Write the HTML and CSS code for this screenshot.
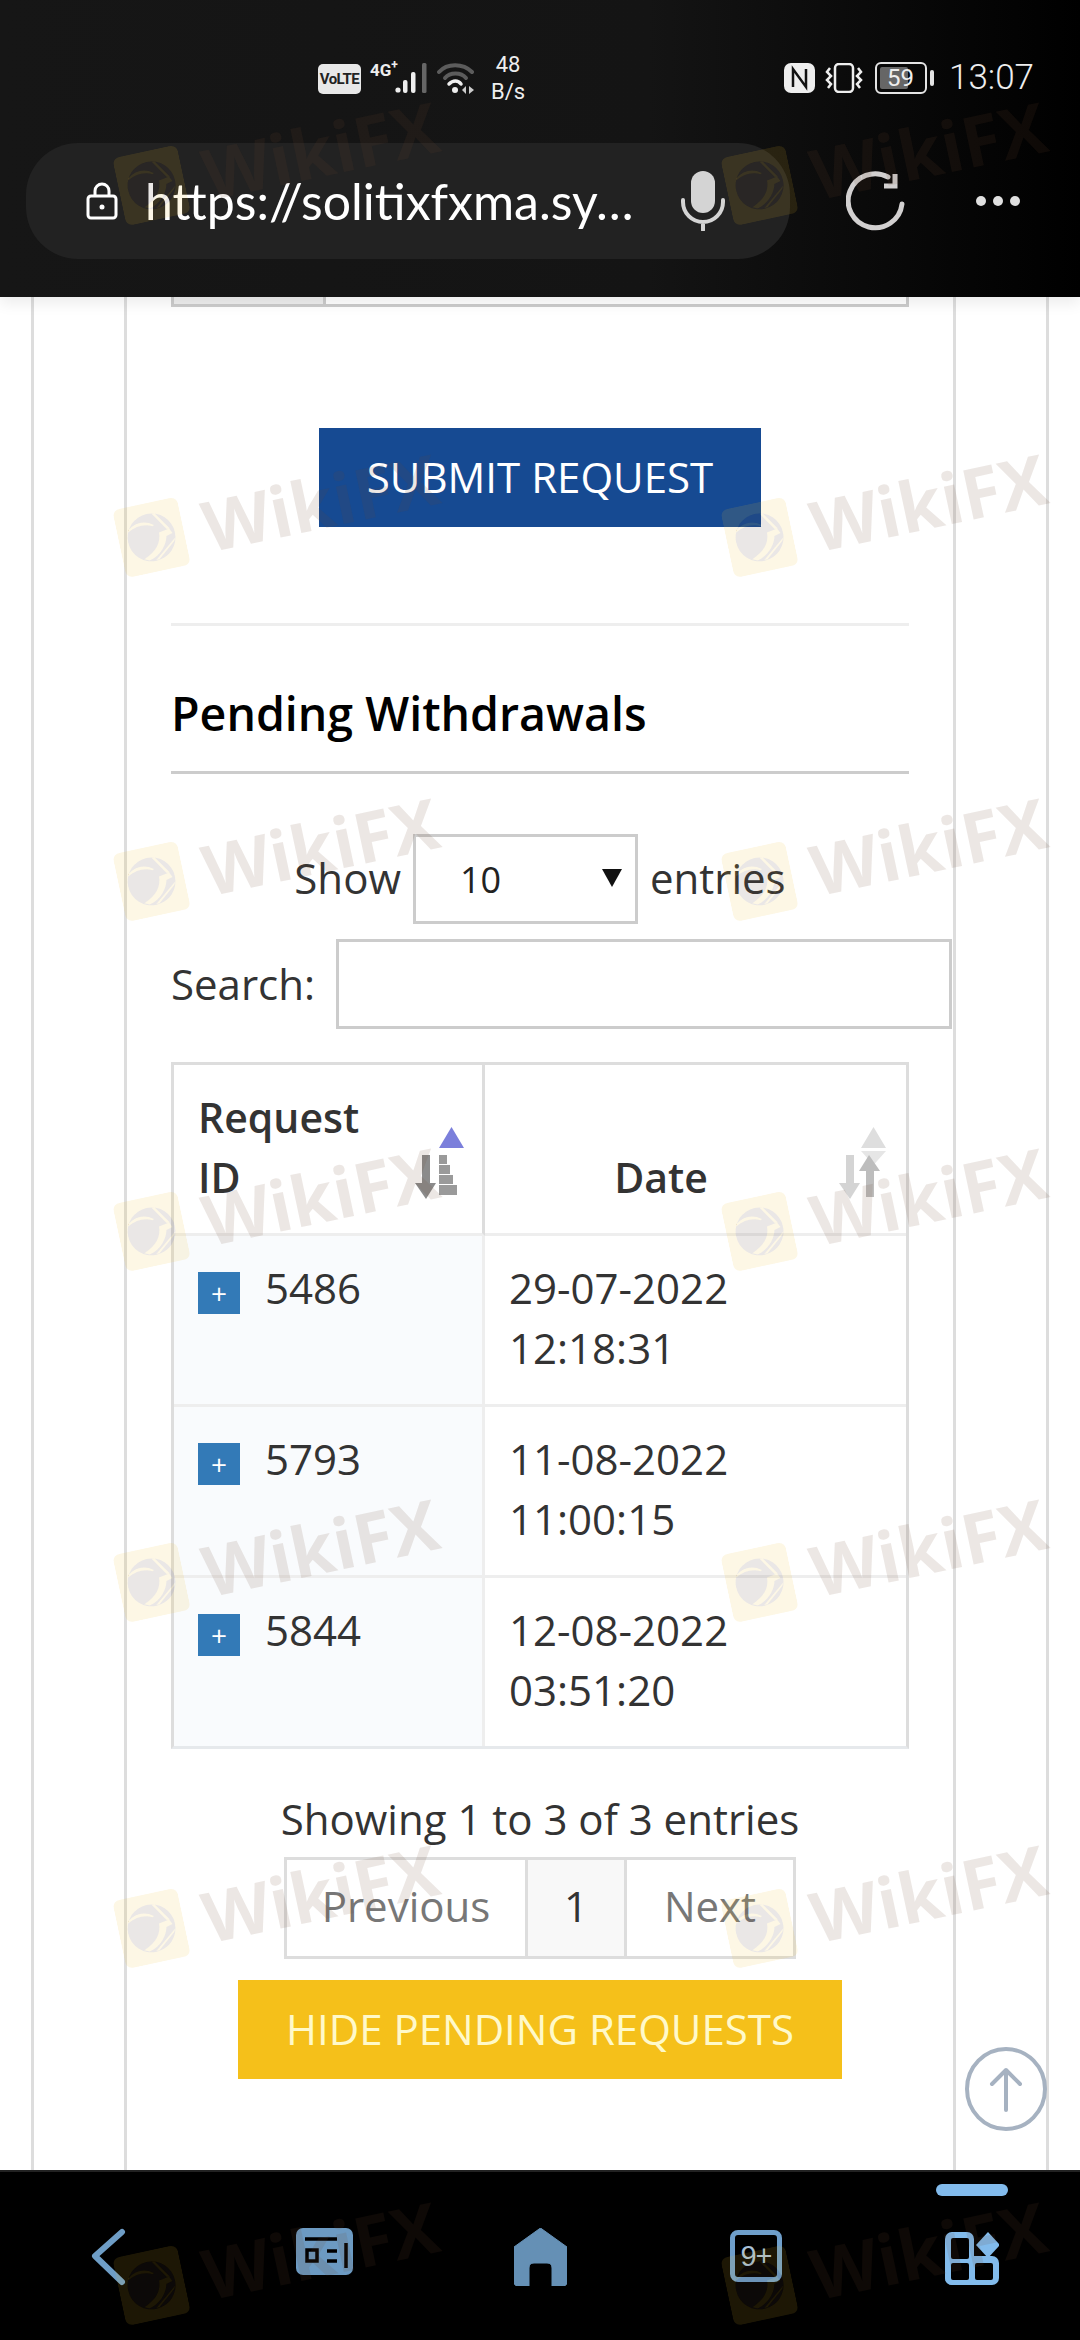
FILE: index.html
```html
<!DOCTYPE html>
<html lang="en">
<head>
  <meta charset="UTF-8" />
  <meta name="viewport" content="width=device-width, initial-scale=1.0" />
  <title>Pending Withdrawals</title>
  <link rel="stylesheet" href="styles.css">
</head>
<body>
  <svg class="defs" width="0" height="0">
    <symbol id="wm-logo" viewBox="0 0 80 84">
      <path fill="#f0be28" fill-opacity="0.12" fill-rule="evenodd" d="M10 0H70Q80 0 80 10V74Q80 84 70 84H10Q0 84 0 74V10Q0 0 10 0ZM40 13A29 29 0 1 0 40 71A29 29 0 1 0 40 13Z"/>
      <path fill="#f0be28" fill-opacity="0.12" d="M63 36L50 38C50 50 42 60 26 66L32 69C46 66 56 54 58 44L66 42ZM46 14L50 15L64 36L60 36ZM14 28C24 20 36 20 46 28L44 29C34 24 24 25 14 30ZM68 48L66 52L44 70L40 70Z"/>
      <path fill="#5a463c" fill-opacity="0.13" fill-rule="evenodd" d="M40 13A29 29 0 1 0 40 71A29 29 0 1 0 40 13ZM63 36L50 38C50 50 42 60 26 66L32 69C46 66 56 54 58 44L66 42ZM46 14L50 15L64 36L60 36ZM14 28C24 20 36 20 46 28L44 29C34 24 24 25 14 30ZM68 48L66 52L44 70L40 70Z"/>
    </symbol>
  </svg>

  <header class="topbar">
    <div class="statusbar">
      <div class="status-left">
        <span class="volte">VoLTE</span>
        <span class="net">4G<sup>+</sup></span>
        <svg class="signal" width="32" height="30" viewBox="0 0 32 30">
          <circle cx="3" cy="27" r="2.6" fill="#eee"/>
          <rect x="8" y="17" width="4.5" height="13" rx="2" fill="#eee"/>
          <rect x="16" y="9" width="4.5" height="21" rx="2" fill="#eee"/>
          <rect x="27" y="0" width="4.5" height="30" rx="1.5" fill="#666"/>
        </svg>
        <svg class="wifi" width="38" height="32" viewBox="0 0 38 32">
          <path d="M2 10C10 1 26 1 35 10" fill="none" stroke="#5c5c5c" stroke-width="4" stroke-linecap="round"/>
          <path d="M8 16C13 10 24 10 29 16" fill="none" stroke="#5c5c5c" stroke-width="4" stroke-linecap="round"/>
          <path d="M12 22C16 18 21 18 24 22" fill="none" stroke="#eee" stroke-width="3.5" stroke-linecap="round"/>
          <circle cx="18" cy="28" r="3" fill="#eee"/>
          <path d="M29 24V32L25 28ZM32 24V32L37 28Z" fill="#ccc"/>
        </svg>
        <span class="speed">48<br>B/s</span>
      </div>
      <div class="status-right">
        <svg class="nfc" width="31" height="30" viewBox="0 0 31 30">
          <rect x="0" y="0" width="31" height="30" rx="7" fill="#eee"/>
          <path d="M9 24V6L22 24V6" fill="none" stroke="#111" stroke-width="2.5"/>
        </svg>
        <svg class="vibrate" width="38" height="30" viewBox="0 0 38 30">
          <rect x="10" y="1" width="18" height="28" rx="4" fill="none" stroke="#eee" stroke-width="2.5"/>
          <path d="M5 5L2 9L6 13L2 17L6 21L3 25M33 5L36 9L32 13L36 17L32 21L35 25" fill="none" stroke="#eee" stroke-width="2.5"/>
        </svg>
        <span class="battery"><span class="battery-level">59</span></span>
        <span class="battery-nub"></span>
        <span class="time">13:07</span>
      </div>
    </div>
    <div class="urlrow">
      <div class="urlbar">
        <svg class="lock" width="32" height="38" viewBox="0 0 32 38">
          <rect x="2" y="14" width="28" height="22" rx="3" fill="none" stroke="#fff" stroke-width="3"/>
          <path d="M9 14V9A7 7 0 0 1 23 9V14" fill="none" stroke="#fff" stroke-width="3"/>
          <circle cx="16" cy="25" r="2.5" fill="#fff"/>
        </svg>
        <span class="url">https://solitixfxma.sy…</span>
        <svg class="mic" width="44" height="60" viewBox="0 0 44 60">
          <rect x="10" y="0" width="24" height="42" rx="12" fill="#d4d4d4"/>
          <path d="M2 29V31A20 20 0 0 0 42 31V29M22 51V59" fill="none" stroke="#d4d4d4" stroke-width="4" stroke-linecap="round"/>
        </svg>
      </div>
      <svg class="reload" width="60" height="60" viewBox="0 0 60 60">
        <path d="M56 33A27 27 0 1 1 42 6" fill="none" stroke="#d2d0d0" stroke-width="5" stroke-linecap="round"/>
        <path d="M49 3V15H38" fill="none" stroke="#d2d0d0" stroke-width="5"/>
      </svg>
      <div class="dots"><span></span><span></span><span></span></div>
    </div>
  </header>

  <main class="page">
    <div class="col-outer">
      <div class="col-inner">
        <div class="prev-table"><div class="prev-cell"></div></div>

        <div class="submit-wrap">
          <button class="btn btn-submit">SUBMIT REQUEST</button>
        </div>

        <hr class="divider" />

        <h3 class="section-title">Pending Withdrawals</h3>

        <div class="length-row">
          <label>Show</label>
          <div class="select-wrap">
            <select class="length-select"><option>10</option></select>
          </div>
          <label>entries</label>
        </div>

        <div class="search-row">
          <label for="search">Search:</label>
          <input id="search" class="search-input" type="text" />
        </div>

        <table class="requests">
          <colgroup><col class="col-id" /><col /></colgroup>
          <thead>
            <tr>
              <th class="sort-cell">Request ID
                <svg class="sort-icon" width="50" height="72" viewBox="0 0 50 72">
                  <path d="M36.5 0L49 21H24Z" fill="#7b7fdb"/>
                  <path d="M7 28H15V56H21L11 72L0 56H7Z" fill="#8b8b8b"/>
                  <path d="M24 28H32V37H24ZM24 38H35V47H24ZM24 48H38V57H24ZM24 58H42V68H24Z" fill="#9a9a9a"/>
                </svg>
              </th>
              <th class="sort-cell center">Date
                <svg class="sort-icon" width="50" height="72" viewBox="0 0 50 72">
                  <path d="M34.5 0L47 21H22Z" fill="#dedede"/>
                  <path d="M22 24H47L34.5 38Z" fill="#e6e6e6"/>
                  <path d="M7 28H15V56H21L11 72L0 56H7Z" fill="#d4d4d4"/>
                  <path d="M30 28L41 44H35V70H27V44H20Z" fill="#bdbdbd"/>
                </svg>
              </th>
            </tr>
          </thead>
          <tbody>
            <tr>
              <td class="id-cell"><span class="expand">+</span>5486</td>
              <td>29-07-2022<br>12:18:31</td>
            </tr>
            <tr>
              <td class="id-cell"><span class="expand">+</span>5793</td>
              <td>11-08-2022<br>11:00:15</td>
            </tr>
            <tr>
              <td class="id-cell"><span class="expand">+</span>5844</td>
              <td>12-08-2022<br>03:51:20</td>
            </tr>
          </tbody>
        </table>

        <div class="table-info">Showing 1 to 3 of 3 entries</div>

        <div class="pagination">
          <a class="page-link prev">Previous</a>
          <a class="page-link current">1</a>
          <a class="page-link next">Next</a>
        </div>

        <div class="hide-wrap">
          <button class="btn btn-hide">HIDE PENDING REQUESTS</button>
        </div>
      </div>
    </div>

    <svg class="to-top" width="84" height="86" viewBox="0 0 84 86">
      <ellipse cx="42" cy="43" rx="39" ry="40" fill="none" stroke="#a6b2c1" stroke-width="4"/>
      <path d="M42 64V24M28 38L42 24L56 38" fill="none" stroke="#a6b2c1" stroke-width="4" stroke-linecap="round" stroke-linejoin="round"/>
    </svg>
  </main>

  <footer class="navbar">
    <div class="nav-item">
      <svg width="36" height="58" viewBox="0 0 36 58">
        <path d="M32 4L5 28L32 54" fill="none" stroke="#6e9dc6" stroke-width="6" stroke-linecap="round" stroke-linejoin="round"/>
      </svg>
    </div>
    <div class="nav-item">
      <svg width="57" height="47" viewBox="0 0 57 47">
        <rect width="57" height="47" rx="7" fill="#6c9ac2"/>
        <path d="M9 11H41M31 23H41M31 33H41M50 15V40" fill="none" stroke="#000" stroke-width="3.5"/>
        <rect x="11" y="22" width="10" height="11" fill="none" stroke="#000" stroke-width="3.5"/>
      </svg>
    </div>
    <div class="nav-item">
      <svg width="53" height="58" viewBox="0 0 53 58">
        <path d="M26.5 0L53 19V54Q53 58 49 58H38V40Q38 35 33 35H20Q15 35 15 40V58H4Q0 58 0 54V19Z" fill="#6590b5" stroke="#6590b5" stroke-width="1" stroke-linejoin="round"/>
      </svg>
    </div>
    <div class="nav-item">
      <div class="tabs-count">9+</div>
    </div>
    <div class="nav-item active">
      <span class="nav-pill"></span>
      <svg width="54" height="57" viewBox="0 0 54 57">
        <rect x="0" y="4" width="29" height="53" rx="7" fill="#82bbec"/>
        <rect x="0" y="28" width="54" height="29" rx="7" fill="#82bbec"/>
        <path d="M43 4L55 17L43 30L31 17Z" fill="#82bbec"/>
        <rect x="6" y="10" width="18" height="21" rx="2" fill="#000"/>
        <rect x="6" y="35" width="18" height="17" rx="2" fill="#000"/>
        <rect x="30" y="35" width="18" height="17" rx="2" fill="#000"/>
      </svg>
    </div>
  </footer>

  <!-- Wasserzeichen liegt ueber der ganzen Seite -->
  <div class="watermarks">
    <div class="wm"><svg class="wm-mark"><use href="#wm-logo"/></svg><span>WikiFX</span></div>
    <div class="wm"><svg class="wm-mark"><use href="#wm-logo"/></svg><span>WikiFX</span></div>
    <div class="wm"><svg class="wm-mark"><use href="#wm-logo"/></svg><span>WikiFX</span></div>
    <div class="wm"><svg class="wm-mark"><use href="#wm-logo"/></svg><span>WikiFX</span></div>
    <div class="wm"><svg class="wm-mark"><use href="#wm-logo"/></svg><span>WikiFX</span></div>
    <div class="wm"><svg class="wm-mark"><use href="#wm-logo"/></svg><span>WikiFX</span></div>
    <div class="wm"><svg class="wm-mark"><use href="#wm-logo"/></svg><span>WikiFX</span></div>
    <div class="wm"><svg class="wm-mark"><use href="#wm-logo"/></svg><span>WikiFX</span></div>
    <div class="wm"><svg class="wm-mark"><use href="#wm-logo"/></svg><span>WikiFX</span></div>
    <div class="wm"><svg class="wm-mark"><use href="#wm-logo"/></svg><span>WikiFX</span></div>
    <div class="wm"><svg class="wm-mark"><use href="#wm-logo"/></svg><span>WikiFX</span></div>
    <div class="wm"><svg class="wm-mark"><use href="#wm-logo"/></svg><span>WikiFX</span></div>
    <div class="wm"><svg class="wm-mark"><use href="#wm-logo"/></svg><span>WikiFX</span></div>
    <div class="wm"><svg class="wm-mark"><use href="#wm-logo"/></svg><span>WikiFX</span></div>
  </div>
</body>
</html>
```

FILE: styles.css
```css
* {
  box-sizing: border-box;
}

html,
body {
  margin: 0;
  height: 2340px;
  overflow: hidden;
}

body {
  position: relative;
  display: flex;
  flex-direction: column;
  width: 1080px;
  font-family: 'Open Sans', sans-serif;
  font-size: 42px;
  line-height: 60px;
  color: #333;
  background-color: #fff;
}

.defs {
  position: absolute;
}

/* Browser-Leiste oben */
.topbar {
  position: relative;
  z-index: 2;
  height: 297px;
  flex-shrink: 0;
  background: linear-gradient(90deg, #161616 0%, #141414 60%, #000 100%);
  box-shadow: 0 6px 14px rgba(0, 0, 0, 0.08);
}

.statusbar {
  display: flex;
  justify-content: space-between;
  align-items: flex-start;
  height: 143px;
  padding: 58px 46px 0 318px;
  color: #eee;
  font-family: Roboto, sans-serif;
}

.status-left,
.status-right {
  display: flex;
  align-items: flex-start;
}

.volte {
  width: 43px;
  height: 30px;
  margin-top: 6px;
  border-radius: 5px;
  background-color: #e8e8e8;
  color: #222;
  font-size: 15px;
  font-weight: 700;
  line-height: 30px;
  text-align: center;
  letter-spacing: -0.5px;
}

.net {
  width: 32px;
  margin-top: 3px;
  margin-left: 9px;
  font-size: 17px;
  font-weight: 700;
  line-height: 18px;
  white-space: nowrap;
}

.net sup {
  font-size: 12px;
  line-height: 0;
}

.signal {
  margin: 5px 0 0 -7px;
}

.wifi {
  margin: 4px 0 0 10px;
}

.speed {
  width: 50px;
  margin-top: -7px;
  margin-left: 8px;
  font-size: 22px;
  line-height: 27px;
  text-align: center;
  color: #eee;
}

.nfc {
  margin-top: 5px;
}

.vibrate {
  margin: 5px 0 0 10px;
}

.battery {
  width: 52px;
  height: 32px;
  margin: 4px 0 0 12px;
  padding: 3px;
  border: 2px solid #e4e4e4;
  border-radius: 6px;
}

.battery-level {
  display: block;
  width: 28px;
  height: 22px;
  padding-left: 7px;
  border-radius: 2px;
  background-color: #666;
  color: #eee;
  font-size: 24px;
  line-height: 22px;
  white-space: nowrap;
}

.battery-nub {
  width: 4px;
  height: 16px;
  margin: 12px 0 0 3px;
  border-radius: 2px;
  background-color: #e4e4e4;
}

.time {
  margin-left: 15px;
  font-size: 35px;
  font-weight: 300;
  line-height: 40px;
  color: #eee;
}

.urlrow {
  display: flex;
  align-items: center;
}

.urlbar {
  display: flex;
  align-items: center;
  width: 764px;
  height: 116px;
  margin-left: 26px;
  padding: 0 65px 0 60px;
  border-radius: 52px;
  background-color: #222;
}

.url {
  margin-left: 27px;
  font-family: Lato, sans-serif;
  font-size: 50px;
  color: #fff;
  white-space: nowrap;
}

.mic {
  margin-left: auto;
  flex-shrink: 0;
}

.reload {
  margin-left: 56px;
}

.dots {
  display: flex;
  gap: 7px;
  margin-left: 70px;
}

.dots span {
  width: 10px;
  height: 10px;
  border-radius: 50%;
  background-color: #e0e0e0;
}

/* Seiteninhalt */
.page {
  position: relative;
  flex: 1;
  overflow: hidden;
}

.col-outer {
  height: 100%;
  margin: 0 31px;
  padding: 0 90px;
  border-left: 3px solid #ddd;
  border-right: 3px solid #ddd;
}

.col-inner {
  height: 100%;
  padding: 0 44px;
  border-left: 3px solid #ddd;
  border-right: 3px solid #ddd;
}

.prev-table {
  height: 10px;
  border: 3px solid #ccc;
  border-top: none;
}

.prev-cell {
  width: 152px;
  height: 7px;
  background-color: #eee;
  border-right: 3px solid #ccc;
}

.submit-wrap,
.hide-wrap {
  display: flex;
  justify-content: center;
}

.submit-wrap {
  margin-top: 121px;
}

.btn {
  border: none;
  font-family: 'Open Sans', sans-serif;
  font-size: 42px;
  line-height: 60px;
  color: #fff;
  padding: 19px 0 20px;
  text-align: center;
}

.btn-submit {
  width: 442px;
  background-color: #164a92;
}

.btn-hide {
  width: 604px;
  background-color: #f5c01a;
  color: #fff9c9;
}

.divider {
  height: 3px;
  margin: 96px 0 0;
  border: none;
  background-color: #eee;
}

.section-title {
  height: 148px;
  margin: 0;
  padding-top: 54px;
  border-bottom: 3px solid #ccc;
  font-size: 46.5px;
  font-weight: 600;
  line-height: 66px;
  color: #000;
}

.length-row {
  display: flex;
  justify-content: center;
  align-items: center;
  gap: 12px;
  margin-top: 60px;
}

.length-row label {
  margin-top: -3px;
}

.select-wrap {
  position: relative;
}

.select-wrap::after {
  content: '';
  position: absolute;
  top: 35px;
  right: 16px;
  border-left: 10px solid transparent;
  border-right: 10px solid transparent;
  border-top: 18px solid #111;
}

.length-select {
  display: block;
  width: 225px;
  height: 90px;
  padding: 0 0 0 44px;
  border: 3px solid #ccc;
  border-radius: 0;
  background-color: transparent;
  appearance: none;
  font-family: 'Open Sans', sans-serif;
  font-size: 36px;
  color: #222;
}

.search-row {
  display: flex;
  align-items: center;
  gap: 21px;
  margin-top: 15px;
}

.search-input {
  flex-shrink: 0;
  width: 616px;
  height: 90px;
  border: 3px solid #ccc;
  background-color: transparent;
}

/* Tabelle */
.requests {
  width: 738px;
  margin-top: 33px;
  border: 3px solid #ddd;
  border-bottom-color: #e6e9ec;
  border-spacing: 0;
  table-layout: fixed;
}

.col-id {
  width: 311px;
}

.requests th,
.requests td {
  padding: 22px 24px 26px;
  vertical-align: bottom;
  text-align: left;
  border-right: 3px solid #eee;
  border-bottom: 3px solid #eee;
}

.requests th {
  font-size: 41px;
  font-weight: 600;
  border-right-color: #ddd;
}

.requests td {
  vertical-align: top;
}

.requests th:last-child,
.requests td:last-child {
  border-right: none;
}

.requests tr:last-child td {
  border-bottom: none;
}

.sort-cell {
  position: relative;
  padding-right: 93px !important;
}

.sort-cell.center {
  text-align: center !important;
}

.sort-icon {
  position: absolute;
  right: 17px;
  bottom: 34px;
}

.id-cell {
  background-color: #f9fbfd;
}

.expand {
  display: inline-block;
  width: 42px;
  height: 42px;
  margin-top: 14px;
  margin-right: 25px;
  background-color: #337ab7;
  color: #fff;
  font-size: 28px;
  line-height: 42px;
  text-align: center;
  vertical-align: top;
}

.table-info {
  margin-top: 40px;
  text-align: center;
}

.pagination {
  display: flex;
  width: 512px;
  height: 102px;
  margin: 8px auto 0;
  border: 3px solid #ddd;
}

.page-link {
  padding: 16px 0;
  text-align: center;
  color: #777;
}

.prev {
  width: 241px;
  border-right: 3px solid #ddd;
}

.current {
  width: 99px;
  background-color: #f8f8f8;
  border-right: 3px solid #ddd;
  color: #333;
}

.next {
  flex: 1;
}

.hide-wrap {
  margin-top: 21px;
}

.to-top {
  position: absolute;
  right: 32px;
  bottom: 38px;
}

/* Navigation unten */
.navbar {
  display: grid;
  grid-template-columns: repeat(5, 216px);
  height: 170px;
  flex-shrink: 0;
  padding-top: 54px;
  border-top: 2px solid #222;
  background-color: #000;
}

.nav-item {
  position: relative;
  display: flex;
  justify-content: center;
  align-items: flex-start;
  height: 60px;
  padding-top: 2px;
}

.tabs-count {
  width: 52px;
  height: 52px;
  margin-top: 2px;
  border: 5px solid #6f9fcb;
  border-radius: 8px;
  font-family: 'Liberation Sans', sans-serif;
  font-size: 29px;
  line-height: 42px;
  letter-spacing: -1px;
  text-align: center;
  color: #a9c0d6;
}

.nav-pill {
  position: absolute;
  top: -42px;
  left: 72px;
  width: 72px;
  height: 12px;
  border-radius: 6px;
  background-color: #82bbec;
}

/* Wasserzeichen */
.watermarks {
  position: absolute;
  top: 158px;
  left: 112px;
  z-index: 5;
  display: grid;
  grid-template-columns: 608px 330px;
  grid-template-rows: 352px 344px 350px 351px 346px 357px 90px;
  width: 938px;
  pointer-events: none;
}

.wm {
  display: flex;
  align-items: center;
  gap: 20px;
  width: 330px;
  height: 70px;
  transform: rotate(-12deg);
  transform-origin: 0 0;
  font-family: 'Open Sans', sans-serif;
  font-size: 70px;
  font-weight: 700;
  line-height: 70px;
  color: rgba(110, 70, 50, 0.13);
}

.wm-mark {
  width: 66px;
  height: 70px;
  flex-shrink: 0;
}
```
